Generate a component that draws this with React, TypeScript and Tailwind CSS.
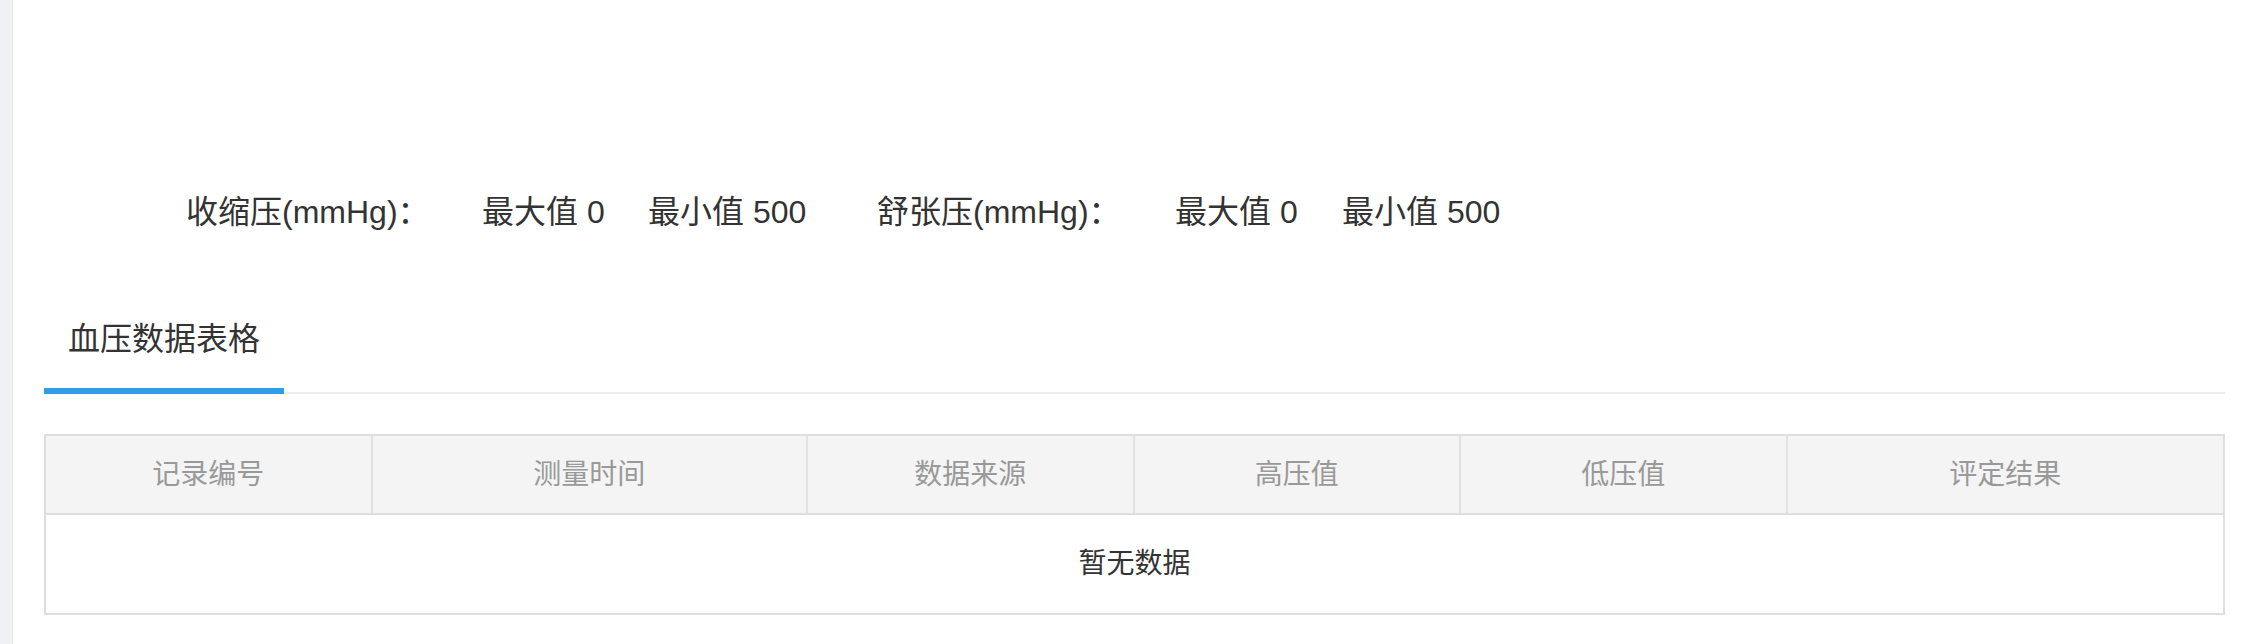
const columns = [
  { title: '记录编号' },
  { title: '测量时间' },
  { title: '数据来源' },
  { title: '高压值' },
  { title: '低压值' },
  { title: '评定结果' },
];

export default function App() {
  return (
    <div className="flex h-[644px] w-full bg-white font-['Liberation_Sans','Noto_Sans_CJK_SC',sans-serif] text-[#333333]">
      {/* left strip */}
      <div className="w-[13px] shrink-0 border-r border-[#e2e4e8] bg-[#eff1f4]" />

      <main className="flex-1 pl-[31px] pr-[19px] pt-[188px]">
        {/* summary row */}
        <div className="flex pl-[142px] text-[32px] leading-[48px] whitespace-nowrap">
          <span className="w-[296px]">收缩压(mmHg)：</span>
          <span className="w-[166px]">最大值 0</span>
          <span className="w-[229px]">最小值 500</span>
          <span className="w-[298px]">舒张压(mmHg)：</span>
          <span className="w-[167px]">最大值 0</span>
          <span>最小值 500</span>
        </div>

        {/* tabs */}
        <div className="mt-[79px] flex border-b-2 border-[#eeeeee]">
          <div className="-mb-[2px] w-[240px] border-b-[6px] border-[#2b9fe9] pb-[25px] text-center text-[32px] leading-[48px]">
            血压数据表格
          </div>
        </div>

        {/* table */}
        <div className="mt-[40px] border-2 border-[#dedede]">
          <div className="grid h-[79px] grid-cols-[15fr_20fr_15fr_15fr_15fr_20fr] border-b-2 border-[#dedede] bg-[#f4f4f4]">
            {columns.map((col, i) => (
              <div
                key={col.title}
                className={
                  'flex items-center justify-center text-[28px] text-[#999999] ' +
                  (i < columns.length - 1 ? 'border-r-2 border-[#e2e2e2]' : '')
                }
              >
                {col.title}
              </div>
            ))}
          </div>
          <div className="flex h-[98px] items-center justify-center text-[28px] text-[#333333]">
            暂无数据
          </div>
        </div>
      </main>
    </div>
  );
}
